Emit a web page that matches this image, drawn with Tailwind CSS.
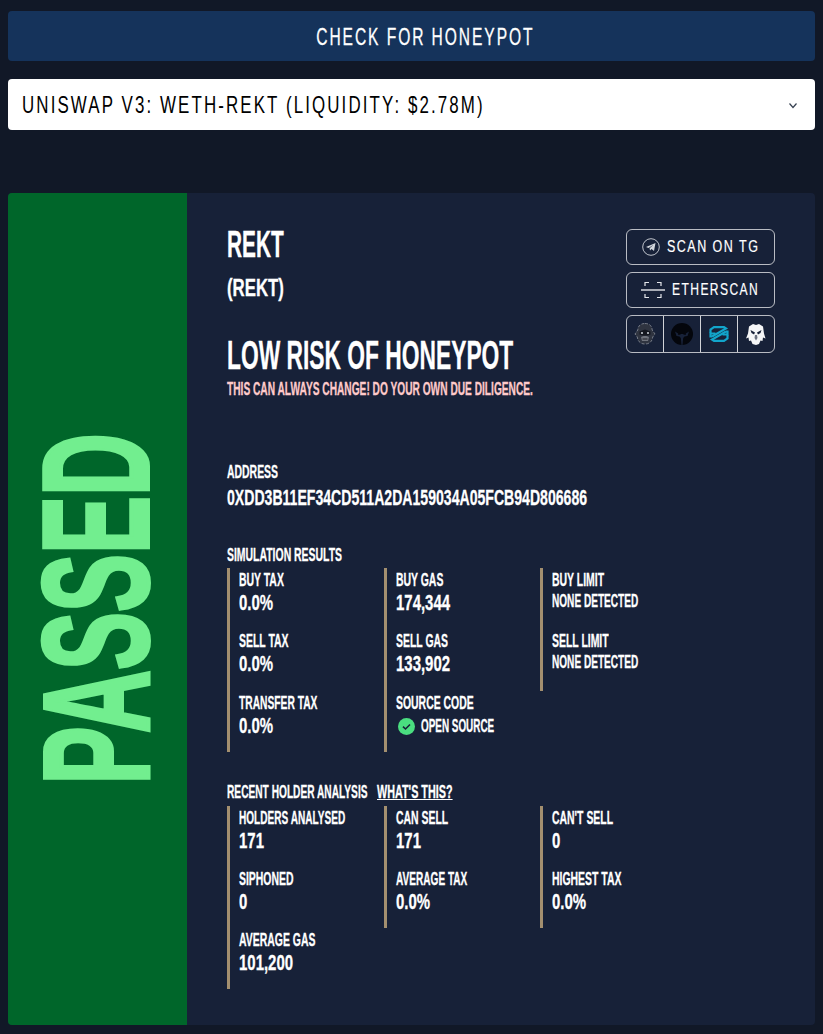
<!DOCTYPE html>
<html lang="en">
<head>
    <title>Honeypot check</title>
    <meta charset="UTF-8">
    <meta name="viewport" content="width=device-width, initial-scale=1">
    <script src="https://cdn.jsdelivr.net/npm/@tailwindcss/browser@4"></script>
</head>
<body class="bg-[#111827] font-['Liberation_Sans',sans-serif] text-white h-[1034px] overflow-hidden">
<div class="px-2 pt-[11px]">
    <button class="w-full h-[50px] rounded bg-[#15335b] flex items-center justify-center pl-7 pt-px text-white">
        <span class="text-[24px] tracking-[3px] whitespace-nowrap scale-x-[.648] [-webkit-text-stroke:0.3px]">CHECK FOR HONEYPOT</span>
    </button>
    <div class="mt-[18px] h-[51px] rounded bg-white flex items-center justify-between pl-[14px] pr-4 text-black">
        <span class="w-[500px] text-[24px] tracking-[3px] whitespace-nowrap origin-left scale-x-[.704]">UNISWAP V3: WETH-REKT (LIQUIDITY: $2.78M)</span>
        <svg class="w-3 h-3" viewBox="0 0 12 12" fill="none" stroke="#374151" stroke-width="1.2"><path d="M2.5 4.5 6 8.5l3.5-4"/></svg>
    </div>

    <div class="mt-[63px] h-[832px] rounded bg-[#172138] flex overflow-hidden">
        <div class="w-[179px] shrink-0 bg-[#00662a] flex items-center justify-center">
            <span class="mr-1 [writing-mode:vertical-rl] rotate-180 font-bold text-[#72ee8f] text-[150px] [-webkit-text-stroke:4px_#72ee8f] leading-none whitespace-nowrap origin-center scale-y-[.58]">PASSED</span>
        </div>

        <div class="flex-1 min-w-0 pl-10 pr-10 font-bold [-webkit-text-stroke:0.3px]">
            <div class="flex justify-between pt-9">
                <div class="w-[340px] shrink-0">
                    <h1 class="-mt-[2px] text-[36px] leading-[36px] origin-left scale-x-[.58] whitespace-nowrap">REKT</h1>
                    <h2 class="mt-[9px] text-[24px] leading-8 origin-left scale-x-[.7] whitespace-nowrap">(REKT)</h2>
                    <h2 class="mt-[29px] text-[40px] leading-[44px] origin-left scale-x-[.57] whitespace-nowrap">LOW RISK OF HONEYPOT</h2>
                    <p class="mt-[3px] text-[18px] leading-[18px] text-[#fecaca] origin-left scale-x-[.565] whitespace-nowrap">THIS CAN ALWAYS CHANGE! DO YOUR OWN DUE DILIGENCE.</p>
                </div>
                <div class="w-[149px] shrink-0 font-normal [-webkit-text-stroke:0.2px] flex flex-col gap-[7px]">
                    <a class="h-9 border border-white/70 rounded-md flex items-center justify-end gap-[7px] pr-[15px] text-[17px] tracking-[2px]">
                        <svg class="w-[18px] h-[18px]" viewBox="0 0 18 18" fill="none"><circle cx="9" cy="9" r="8.3" stroke="#d1d5db" stroke-width="0.9"/><path d="M4 9 13.5 5 12 13 9.5 11 8 12.5 7.6 10.3 11.5 6.8 6.5 9.9Z" fill="#d1d5db"/></svg>
                        <span class="w-[92px] whitespace-nowrap origin-left scale-x-[.736]">SCAN ON TG</span>
                    </a>
                    <a class="h-9 border border-white/70 rounded-md flex items-center justify-end gap-[7px] pr-[15px] text-[17px] tracking-[2px]">
                        <svg class="w-[24px] h-[18px]" viewBox="0 0 24 18" fill="none" stroke="#e5e7eb"><path d="M4 5V1.5h4M16 1.5h4V5M4 13v3.5h4M16 16.5h4V13" stroke-width="1.2"/><path d="M0 9h24" stroke-width="1.4"/></svg>
                        <span class="w-[87px] whitespace-nowrap origin-left scale-x-[.71]">ETHERSCAN</span>
                    </a>
                    <div class="h-[38px] border border-white/70 rounded-md flex divide-x divide-white/80">
                        <div class="flex-1 flex items-center justify-center">
                            <svg class="w-[22px] h-6" viewBox="0 0 22 24"><path d="M11 1.5c4.5 0 7 2.5 7.2 6.5L21 12l-2.3 3c-.3 4-3 7-7.7 7s-7.4-3-7.7-7L1 12l2.8-4C4 4 6.5 1.5 11 1.5Z" fill="#2f3440" stroke="#8b909a" stroke-width=".8" stroke-dasharray="3 1.5"/><path d="M5.5 9.5 11 7.5l5.500 2v3l-3 1h-5l-3-1Z" fill="#14171f"/><circle cx="8" cy="11" r="1.1" fill="#c4c8ce"/><circle cx="14" cy="11" r="1.1" fill="#c4c8ce"/><path d="M7 15c1.5-1.5 6.5-1.5 8 0l-1 4H8Z" fill="#70747d"/><path d="M8.5 17h5" stroke="#1c1f27"/></svg>
                        </div>
                        <div class="flex-1 flex items-center justify-center">
                            <svg class="w-[22px] h-[22px]" viewBox="0 0 22 22"><circle cx="11" cy="11" r="11" fill="#04060c"/><path d="M4 8.5 8 11h6l4-2.500-1.500 4.500-3 .5-1.300 1.500-.7 7h-1l-.7-7L8.500 13.500l-3-.5Z" fill="#172138"/><path d="M7 11h2.500M12.500 11H15" stroke="#04060c" stroke-width="1.4"/></svg>
                        </div>
                        <div class="flex-1 flex items-center justify-center">
                            <svg class="w-5 h-4" viewBox="0 0 20 16" fill="none" stroke="#12a5cb" stroke-width="2.2"><path d="M1.500 7V3.500L5 1.200h10L17 2.500 3 10.500"/><path d="M18.500 9v3.500L15 14.800H5L3 13.500 17 5.500"/><path d="M3 10.500h-1.500V7.500h5M17 5.500h1.500V8.500h-5"/></svg>
                        </div>
                        <div class="flex-1 flex items-center justify-center">
                            <svg class="w-5 h-6" viewBox="0 0 20 24"><path d="M3 4.500 7 2l3 1 3-1 4 2.500 1 7 1.500 5-2.500-1-.5 3.500-2-.5-1.500 3.500L10 23l-3.500-1-1.500-3.500-2 .5-.5-3.500-2.500 1L2 11.500Z" fill="#f5f6f7"/><path d="M4.500 8 9 10.500 8 12.500 5.500 11ZM15.500 8 11 10.500 12 12.500 14.500 11Z" fill="#172138"/><path d="M9 13h2l.5 3-1.500 2.500L8.500 16Z" fill="#6b7280"/></svg>
                        </div>
                    </div>
                </div>
            </div>

            <div class="mt-[62px] text-[18px] leading-6 origin-left scale-x-[.58] whitespace-nowrap">ADDRESS</div>
            <div class="text-[22px] leading-7 origin-left scale-x-[.64] whitespace-nowrap">0XDD3B11EF34CD511A2DA159034A05FCB94D806686</div>

            <div class="mt-[32px] text-[18px] leading-[22px] origin-left scale-x-[.58] whitespace-nowrap">SIMULATION RESULTS</div>
            <div class="mt-[2px] grid grid-cols-3 w-[470px] items-start">
                <div class="border-l-[3px] border-[#a38f6f] pl-[9px] h-[184px] flex flex-col">
                    <div class="h-[61px] pt-[2px]"><p class="text-[18px] leading-[20px] origin-left scale-x-[.58] whitespace-nowrap">BUY TAX</p><p class="text-[22px] leading-[26px] origin-left scale-x-[.68] whitespace-nowrap">0.0%</p></div>
                    <div class="h-[62px] pt-[2px]"><p class="text-[18px] leading-[20px] origin-left scale-x-[.58] whitespace-nowrap">SELL TAX</p><p class="text-[22px] leading-[26px] origin-left scale-x-[.68] whitespace-nowrap">0.0%</p></div>
                    <div class="h-[61px] pt-[2px]"><p class="text-[18px] leading-[20px] origin-left scale-x-[.57] whitespace-nowrap">TRANSFER TAX</p><p class="text-[22px] leading-[26px] origin-left scale-x-[.68] whitespace-nowrap">0.0%</p></div>
                </div>
                <div class="border-l-[3px] border-[#a38f6f] pl-[9px] h-[184px] flex flex-col">
                    <div class="h-[61px] pt-[2px]"><p class="text-[18px] leading-[20px] origin-left scale-x-[.58] whitespace-nowrap">BUY GAS</p><p class="text-[22px] leading-[26px] origin-left scale-x-[.68] whitespace-nowrap">174,344</p></div>
                    <div class="h-[62px] pt-[2px]"><p class="text-[18px] leading-[20px] origin-left scale-x-[.58] whitespace-nowrap">SELL GAS</p><p class="text-[22px] leading-[26px] origin-left scale-x-[.68] whitespace-nowrap">133,902</p></div>
                    <div class="h-[61px] pt-[2px]"><p class="text-[18px] leading-[20px] origin-left scale-x-[.58] whitespace-nowrap">SOURCE CODE</p>
                        <div class="flex items-center gap-[6px] ml-[2px] h-[26px]">
                            <svg class="w-[17px] h-[17px] shrink-0" viewBox="0 0 17 17"><circle cx="8.5" cy="8.5" r="8.5" fill="#4ade80"/><path d="M5 8.7 7.5 11 12 6.5" fill="none" stroke="#172138" stroke-width="1.6"/></svg>
                            <span class="text-[18px] origin-left scale-x-[.55] whitespace-nowrap">OPEN SOURCE</span>
                        </div>
                    </div>
                </div>
                <div class="border-l-[3px] border-[#a38f6f] pl-[9px] h-[123px] flex flex-col">
                    <div class="h-[61px] pt-[2px]"><p class="text-[18px] leading-[20px] origin-left scale-x-[.58] whitespace-nowrap">BUY LIMIT</p><p class="text-[18px] leading-[22px] origin-left scale-x-[.56] whitespace-nowrap">NONE DETECTED</p></div>
                    <div class="h-[62px] pt-[2px]"><p class="text-[18px] leading-[20px] origin-left scale-x-[.58] whitespace-nowrap">SELL LIMIT</p><p class="text-[18px] leading-[22px] origin-left scale-x-[.56] whitespace-nowrap">NONE DETECTED</p></div>
                </div>
            </div>

            <div class="mt-[29px] flex gap-[10px] text-[18px] leading-[22px] whitespace-nowrap">
                <span class="w-[140px] origin-left scale-x-[.565]">RECENT HOLDER ANALYSIS</span>
                <a class="w-[74px] underline origin-left scale-x-[.6]">WHAT'S THIS?</a>
            </div>
            <div class="mt-[3px] grid grid-cols-3 w-[470px] items-start">
                <div class="border-l-[3px] border-[#a38f6f] pl-[9px] h-[183px] flex flex-col">
                    <div class="h-[61px] pt-[2px]"><p class="text-[18px] leading-[20px] origin-left scale-x-[.56] whitespace-nowrap">HOLDERS ANALYSED</p><p class="text-[22px] leading-[26px] origin-left scale-x-[.68] whitespace-nowrap">171</p></div>
                    <div class="h-[61px] pt-[2px]"><p class="text-[18px] leading-[20px] origin-left scale-x-[.58] whitespace-nowrap">SIPHONED</p><p class="text-[22px] leading-[26px] origin-left scale-x-[.68] whitespace-nowrap">0</p></div>
                    <div class="h-[61px] pt-[2px]"><p class="text-[18px] leading-[20px] origin-left scale-x-[.58] whitespace-nowrap">AVERAGE GAS</p><p class="text-[22px] leading-[26px] origin-left scale-x-[.68] whitespace-nowrap">101,200</p></div>
                </div>
                <div class="border-l-[3px] border-[#a38f6f] pl-[9px] h-[122px] flex flex-col">
                    <div class="h-[61px] pt-[2px]"><p class="text-[18px] leading-[20px] origin-left scale-x-[.58] whitespace-nowrap">CAN SELL</p><p class="text-[22px] leading-[26px] origin-left scale-x-[.68] whitespace-nowrap">171</p></div>
                    <div class="h-[61px] pt-[2px]"><p class="text-[18px] leading-[20px] origin-left scale-x-[.56] whitespace-nowrap">AVERAGE TAX</p><p class="text-[22px] leading-[26px] origin-left scale-x-[.68] whitespace-nowrap">0.0%</p></div>
                </div>
                <div class="border-l-[3px] border-[#a38f6f] pl-[9px] h-[122px] flex flex-col">
                    <div class="h-[61px] pt-[2px]"><p class="text-[18px] leading-[20px] origin-left scale-x-[.58] whitespace-nowrap">CAN'T SELL</p><p class="text-[22px] leading-[26px] origin-left scale-x-[.68] whitespace-nowrap">0</p></div>
                    <div class="h-[61px] pt-[2px]"><p class="text-[18px] leading-[20px] origin-left scale-x-[.58] whitespace-nowrap">HIGHEST TAX</p><p class="text-[22px] leading-[26px] origin-left scale-x-[.68] whitespace-nowrap">0.0%</p></div>
                </div>
            </div>
        </div>
    </div>
</div>
</body>
</html>
